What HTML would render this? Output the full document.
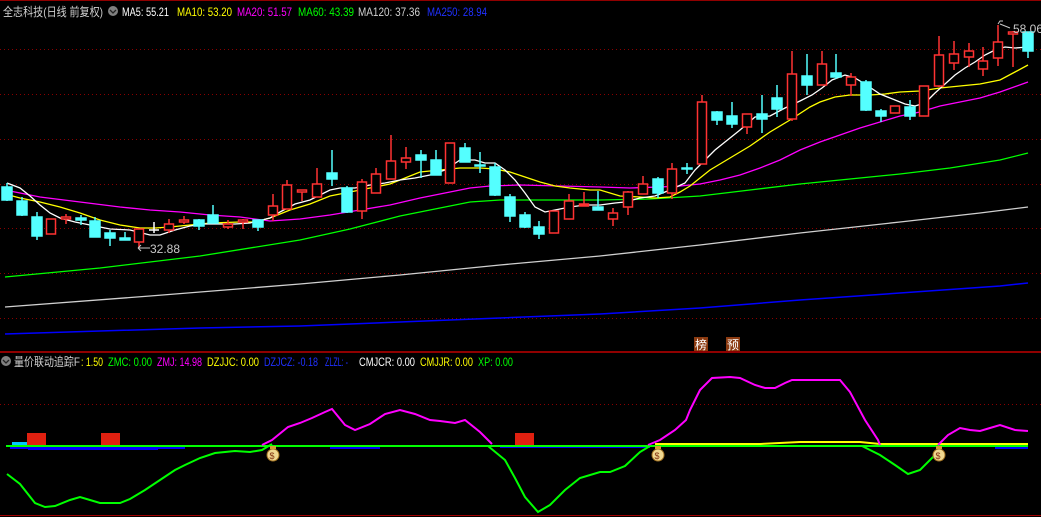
<!DOCTYPE html>
<html><head><meta charset="utf-8"><style>
html,body{margin:0;padding:0;background:#000;width:1041px;height:517px;overflow:hidden}
svg{display:block}
text{font-family:"Liberation Sans","Noto Sans CJK SC",sans-serif;font-size:12px}
</style></head><body>
<svg width="1041" height="517" viewBox="0 0 1041 517" xmlns="http://www.w3.org/2000/svg">
<rect width="1041" height="517" fill="#000"/>
<line x1="0" y1="0.5" x2="1041" y2="0.5" stroke="#900000"/>
<g stroke="#8a0000" stroke-dasharray="1,3">
<line x1="0" y1="49.5" x2="1041" y2="49.5"/><line x1="0" y1="94.5" x2="1041" y2="94.5"/>
<line x1="0" y1="139.5" x2="1041" y2="139.5"/><line x1="0" y1="184.5" x2="1041" y2="184.5"/>
<line x1="0" y1="228.5" x2="1041" y2="228.5"/><line x1="0" y1="273.5" x2="1041" y2="273.5"/>
<line x1="0" y1="318.5" x2="1041" y2="318.5"/><line x1="0" y1="404.5" x2="1041" y2="404.5"/>
</g>
<line x1="0" y1="352" x2="1041" y2="352" stroke="#c00000" stroke-width="1.5"/>
<line x1="0" y1="515.5" x2="1041" y2="515.5" stroke="#a00000"/>

<g fill="none" stroke-width="1.3">
<polyline stroke="#0000ff" stroke-width="1.5" points="5,334 100,331 200,328 300,326 400,322 500,318 600,314 700,308 800,300 900,293 1000,286 1028,283"/>
<polyline stroke="#d0d0d0" points="5,307 150,296 300,284 400,275 500,265 600,256 700,245 800,233 900,222 980,213 1028,207"/>
<polyline stroke="#00ff00" points="5,277 100,268 200,256 300,240 350,229 400,216 430,210 470,202 500,200 540,200 600,200 650,199 700,196 750,190 800,184 850,179 900,174 950,168 1000,160 1028,153"/>
<polyline stroke="#ff00ff" points="5,190 40,197 80,202 120,207 150,210 180,212 210,215 240,217 270,221 300,219 330,215 360,210 390,205 420,198 450,192 470,188 490,186 520,185 560,186 600,187 630,188 660,187 680,186 700,184 720,180 740,175 760,168 780,160 800,150 820,142 840,135 860,128 880,122 900,116 920,112 940,106 960,102 980,98 1000,92 1028,82"/>
<polyline stroke="#ffff00" points="5,194 20,198 40,202 60,207 80,213 100,220 120,225 140,228 155,228 170,227 190,225 210,223 240,222 255,222 270,218 290,210 310,204 330,196 350,192 370,188 390,184 405,178 420,172 440,170 460,168 480,168 495,169 510,172 525,177 540,182 555,186 570,188 590,190 600,190 620,196 640,197 655,198 670,197 680,192 690,186 700,178 710,170 730,158 750,146 770,132 790,120 810,107 820,102 835,97 850,95 870,95 885,94 900,92 920,91 940,88 960,86 980,84 1000,80 1015,72 1028,65"/>
<polyline stroke="#ffffff" points="7,183 20,188 30,196 40,205 50,213 60,218 75,222 95,226 110,229 130,230 150,235 160,235 175,230 190,226 205,224 220,224 235,224 250,223 262,220 270,218 280,212 295,204 310,200 330,190 340,188 355,188 370,185 385,183 400,180 415,178 430,175 445,170 460,160 475,160 485,163 495,163 505,170 515,180 525,193 535,207 545,212 555,210 570,207 585,205 600,205 615,203 625,202 640,198 655,196 670,190 685,183 695,170 705,160 715,150 730,138 740,130 755,117 770,116 785,108 800,101 812,95 822,88 832,80 845,75 855,78 865,84 880,94 895,100 905,104 915,106 925,103 935,93 945,84 955,75 965,68 975,62 985,55 995,50 1005,47 1015,48 1028,47"/>
</g>

<g stroke-width="1.5">
<g stroke="#54ffff" fill="#54ffff">
<line x1="7" y1="183" x2="7" y2="201"/><rect x="2" y="187" width="10" height="13"/>
<line x1="22" y1="197" x2="22" y2="216"/><rect x="17" y="201" width="10" height="14"/>
<line x1="37" y1="212" x2="37" y2="240"/><rect x="32" y="217" width="10" height="19"/>
<line x1="81" y1="215" x2="81" y2="225"/><rect x="76" y="218" width="10" height="2"/>
<line x1="95" y1="217" x2="95" y2="237"/><rect x="90" y="221" width="10" height="16"/>
<line x1="110" y1="230" x2="110" y2="246"/><rect x="105" y="233" width="10" height="5"/>
<line x1="125" y1="232" x2="125" y2="240"/><rect x="120" y="238" width="10" height="2"/>
<line x1="199" y1="219" x2="199" y2="230"/><rect x="194" y="220" width="10" height="6"/>
<line x1="213" y1="205" x2="213" y2="223"/><rect x="208" y="215" width="10" height="8"/>
<line x1="258" y1="220" x2="258" y2="231"/><rect x="253" y="220" width="10" height="7"/>
<line x1="332" y1="150" x2="332" y2="186"/><rect x="327" y="173" width="10" height="6"/>
<line x1="347" y1="186" x2="347" y2="213"/><rect x="342" y="188" width="10" height="24"/>
<line x1="421" y1="150" x2="421" y2="178"/><rect x="416" y="155" width="10" height="5"/>
<line x1="436" y1="150" x2="436" y2="175"/><rect x="431" y="160" width="10" height="15"/>
<line x1="465" y1="143" x2="465" y2="162"/><rect x="460" y="148" width="10" height="14"/>
<line x1="480" y1="152" x2="480" y2="173"/><rect x="475" y="165" width="10" height="1"/>
<line x1="495" y1="163" x2="495" y2="196"/><rect x="490" y="167" width="10" height="28"/>
<line x1="510" y1="194" x2="510" y2="222"/><rect x="505" y="197" width="10" height="19"/>
<line x1="525" y1="212" x2="525" y2="228"/><rect x="520" y="215" width="10" height="12"/>
<line x1="539" y1="221" x2="539" y2="239"/><rect x="534" y="227" width="10" height="7"/>
<line x1="598" y1="191" x2="598" y2="210"/><rect x="593" y="207" width="10" height="3"/>
<line x1="658" y1="177" x2="658" y2="198"/><rect x="653" y="179" width="10" height="14"/>
<line x1="687" y1="163" x2="687" y2="174"/><rect x="682" y="168" width="10" height="1"/>
<line x1="717" y1="111" x2="717" y2="125"/><rect x="712" y="112" width="10" height="8"/>
<line x1="732" y1="102" x2="732" y2="128"/><rect x="727" y="116" width="10" height="8"/>
<line x1="762" y1="95" x2="762" y2="133"/><rect x="757" y="114" width="10" height="5"/>
<line x1="777" y1="85" x2="777" y2="117"/><rect x="772" y="98" width="10" height="11"/>
<line x1="807" y1="54" x2="807" y2="95"/><rect x="802" y="76" width="10" height="9"/>
<line x1="836" y1="54" x2="836" y2="79"/><rect x="831" y="73" width="10" height="4"/>
<line x1="866" y1="80" x2="866" y2="111"/><rect x="861" y="82" width="10" height="28"/>
<line x1="881" y1="109" x2="881" y2="122"/><rect x="876" y="111" width="10" height="5"/>
<line x1="910" y1="100" x2="910" y2="120"/><rect x="905" y="107" width="10" height="9"/>
<line x1="1028" y1="32" x2="1028" y2="58"/><rect x="1023" y="32" width="10" height="19"/>
</g>
<g stroke="#ffffff"><line x1="154" y1="222" x2="154" y2="233"/><line x1="149" y1="230" x2="159" y2="230"/></g>
<g stroke="#ff3232" fill="#000">
<rect x="46.5" y="219" width="9" height="15"/>
<line x1="66" y1="214" x2="66" y2="224"/><rect x="61.5" y="217" width="9" height="2"/>
<line x1="139" y1="242" x2="139" y2="248"/><rect x="134.5" y="229" width="9" height="13"/>
<line x1="169" y1="219" x2="169" y2="233"/><rect x="164.5" y="224" width="9" height="6"/>
<line x1="184" y1="216" x2="184" y2="224"/><rect x="179.5" y="220" width="9" height="2"/>
<line x1="228" y1="220" x2="228" y2="229"/><rect x="223.5" y="224" width="9" height="3"/>
<line x1="243" y1="219" x2="243" y2="229"/><rect x="238.5" y="220" width="9" height="2"/>
<line x1="273" y1="194" x2="273" y2="221"/><rect x="268.5" y="206" width="9" height="9"/>
<line x1="287" y1="180" x2="287" y2="209"/><rect x="282.5" y="185" width="9" height="24"/>
<line x1="302" y1="190" x2="302" y2="201"/><rect x="297.5" y="190" width="9" height="2"/>
<line x1="317" y1="168" x2="317" y2="197"/><rect x="312.5" y="184" width="9" height="13"/>
<line x1="362" y1="179" x2="362" y2="219"/><rect x="357.5" y="182" width="9" height="29"/>
<line x1="376" y1="168" x2="376" y2="193"/><rect x="371.5" y="174" width="9" height="19"/>
<line x1="391" y1="135" x2="391" y2="179"/><rect x="386.5" y="161" width="9" height="18"/>
<line x1="406" y1="147" x2="406" y2="169"/><rect x="401.5" y="158" width="9" height="4"/>
<rect x="445.5" y="143" width="9" height="40"/>
<rect x="549.5" y="211" width="9" height="22"/>
<line x1="569" y1="194" x2="569" y2="219"/><rect x="564.5" y="201" width="9" height="18"/>
<line x1="584" y1="192" x2="584" y2="206"/><rect x="579.5" y="204" width="9" height="2" fill="#ff3232"/>
<line x1="613" y1="208" x2="613" y2="226"/><rect x="608.5" y="213" width="9" height="6"/>
<line x1="628" y1="191" x2="628" y2="215"/><rect x="623.5" y="192" width="9" height="15"/>
<line x1="643" y1="176" x2="643" y2="194"/><rect x="638.5" y="184" width="9" height="10"/>
<line x1="672" y1="163" x2="672" y2="199"/><rect x="667.5" y="169" width="9" height="24"/>
<line x1="702" y1="95" x2="702" y2="164"/><rect x="697.5" y="102" width="9" height="62"/>
<line x1="747" y1="114" x2="747" y2="134"/><rect x="742.5" y="114" width="9" height="13"/>
<line x1="792" y1="51" x2="792" y2="121"/><rect x="787.5" y="74" width="9" height="45"/>
<line x1="822" y1="51" x2="822" y2="85"/><rect x="817.5" y="64" width="9" height="21"/>
<line x1="851" y1="73" x2="851" y2="96"/><rect x="846.5" y="77" width="9" height="8"/>
<rect x="890.5" y="106" width="9" height="7"/>
<rect x="919.5" y="86" width="9" height="30"/>
<line x1="939" y1="36" x2="939" y2="87"/><rect x="934.5" y="55" width="9" height="31"/>
<line x1="954" y1="41" x2="954" y2="70"/><rect x="949.5" y="54" width="9" height="9"/>
<line x1="969" y1="43" x2="969" y2="67"/><rect x="964.5" y="51" width="9" height="6"/>
<line x1="983" y1="47" x2="983" y2="76"/><rect x="978.5" y="61" width="9" height="8"/>
<line x1="998" y1="25" x2="998" y2="66"/><rect x="993.5" y="42" width="9" height="16"/>
<line x1="1013" y1="31" x2="1013" y2="67"/><rect x="1008.5" y="32" width="9" height="2"/>
</g>
</g>

<text x="150" y="253" fill="#c8c8c8">32.88</text>
<path d="M138 248 H150 M138 248 l3 -3 M138 248 l3 3" stroke="#c8c8c8" fill="none"/>
<text x="1013" y="33" fill="#c8c8c8">58.06</text>
<path d="M998 24 l2 -3 h3 M1000 24 l10 4" stroke="#c8c8c8" fill="none"/>

<rect x="694" y="337" width="14" height="14" fill="#8b3a10"/>
<text x="695" y="349" fill="#fff">榜</text>
<rect x="726" y="337" width="14" height="14" fill="#8b3a10"/>
<text x="727" y="349" fill="#fff">预</text>

<g lengthAdjust="spacingAndGlyphs">
<text x="3" y="16" fill="#d0d0d0" textLength="100" lengthAdjust="spacingAndGlyphs">全志科技(日线 前复权)</text>
<text x="122" y="16" fill="#ffffff" textLength="47" lengthAdjust="spacingAndGlyphs">MA5: 55.21</text>
<text x="177" y="16" fill="#ffff00" textLength="55" lengthAdjust="spacingAndGlyphs">MA10: 53.20</text>
<text x="237" y="16" fill="#ff00ff" textLength="55" lengthAdjust="spacingAndGlyphs">MA20: 51.57</text>
<text x="298" y="16" fill="#00ff00" textLength="56" lengthAdjust="spacingAndGlyphs">MA60: 43.39</text>
<text x="358" y="16" fill="#d0d0d0" textLength="62" lengthAdjust="spacingAndGlyphs">MA120: 37.36</text>
<text x="427" y="16" fill="#2030ff" textLength="60" lengthAdjust="spacingAndGlyphs">MA250: 28.94</text>

<text x="14" y="366" fill="#d0d0d0" textLength="66" lengthAdjust="spacingAndGlyphs">量价联动追踪F</text>
<text x="81" y="366" fill="#ffff00" textLength="22" lengthAdjust="spacingAndGlyphs">: 1.50</text>
<text x="108" y="366" fill="#00ff00" textLength="44" lengthAdjust="spacingAndGlyphs">ZMC: 0.00</text>
<text x="157" y="366" fill="#ff00ff" textLength="45" lengthAdjust="spacingAndGlyphs">ZMJ: 14.98</text>
<text x="207" y="366" fill="#ffff00" textLength="52" lengthAdjust="spacingAndGlyphs">DZJJC: 0.00</text>
<text x="264" y="366" fill="#2030ff" textLength="54" lengthAdjust="spacingAndGlyphs">DZJCZ: -0.18</text>
<text x="325" y="366" fill="#2030ff" textLength="23" lengthAdjust="spacingAndGlyphs">ZLZL: -</text>
<text x="359" y="366" fill="#ffffff" textLength="56" lengthAdjust="spacingAndGlyphs">CMJCR: 0.00</text>
<text x="420" y="366" fill="#ffff00" textLength="53" lengthAdjust="spacingAndGlyphs">CMJJR: 0.00</text>
<text x="478" y="366" fill="#00ff00" textLength="35" lengthAdjust="spacingAndGlyphs">XP: 0.00</text>
</g>
<circle cx="113" cy="11" r="5" fill="#808080"/><path d="M110 10 l3 3 l3 -3" stroke="#222" fill="none" stroke-width="1.3"/>
<circle cx="6" cy="361" r="5" fill="#808080"/><path d="M3 360 l3 3 l3 -3" stroke="#222" fill="none" stroke-width="1.3"/>

<g fill="#0000ff">
<rect x="10" y="446" width="175" height="3"/><rect x="28" y="448" width="130" height="2"/>
<rect x="330" y="446" width="50" height="3"/><rect x="500" y="446" width="150" height="2"/>
<rect x="995" y="446" width="33" height="3"/>
</g>
<rect x="12" y="442" width="15" height="4" fill="#00c8ff"/>
<rect x="27" y="433" width="19" height="13" fill="#e02010"/>
<rect x="101" y="433" width="19" height="13" fill="#e02010"/>
<rect x="515" y="433" width="19" height="13" fill="#e02010"/>
<polyline fill="none" stroke="#ffff00" stroke-width="2" points="655,444 760,444 800,442 860,442 880,444 1028,444"/>
<line x1="6" y1="446" x2="1028" y2="446" stroke="#00ff00" stroke-width="2"/>
<g fill="none" stroke-width="2">
<polyline stroke="#ff00ff" points="262,445 272,440 288,427 300,423 312,418 325,412 332,409 345,425 355,430 370,424 385,414 400,410 415,414 430,420 440,421 455,423 465,420 480,432 492,444"/>
<polyline stroke="#ff00ff" points="648,445 660,440 675,430 686,420 690,410 700,390 712,378 730,377 740,378 755,385 765,388 775,388 785,383 792,380 840,380 850,392 865,420 878,440 880,445"/>
<polyline stroke="#ff00ff" points="938,445 948,435 960,428 970,430 980,431 990,428 1000,425 1015,430 1028,431"/>
<polyline stroke="#00ff00" points="7,474 20,484 35,503 45,507 55,506 70,500 80,497 90,500 100,503 120,503 130,499 145,490 160,480 175,470 185,465 200,458 215,453 235,451 250,452 262,450 272,444"/>
<polyline stroke="#00ff00" points="488,446 505,460 515,478 525,497 538,512 550,505 565,490 580,478 600,472 610,472 625,466 640,452 650,446"/>
<polyline stroke="#00ff00" points="862,446 880,455 895,465 908,474 920,470 935,455 940,446"/>
</g>
<g>
<circle cx="273" cy="455" r="6" fill="#f0d890" stroke="#a07020"/><rect x="270" y="446" width="6" height="3" fill="#d0a030"/><text x="269.5" y="459" fill="#803010" style="font-size:9px">$</text>
<circle cx="658" cy="455" r="6" fill="#f0d890" stroke="#a07020"/><rect x="655" y="446" width="6" height="3" fill="#d0a030"/><text x="654.5" y="459" fill="#803010" style="font-size:9px">$</text>
<circle cx="939" cy="455" r="6" fill="#f0d890" stroke="#a07020"/><rect x="936" y="446" width="6" height="3" fill="#d0a030"/><text x="935.5" y="459" fill="#803010" style="font-size:9px">$</text>
</g>
</svg>
</body></html>
